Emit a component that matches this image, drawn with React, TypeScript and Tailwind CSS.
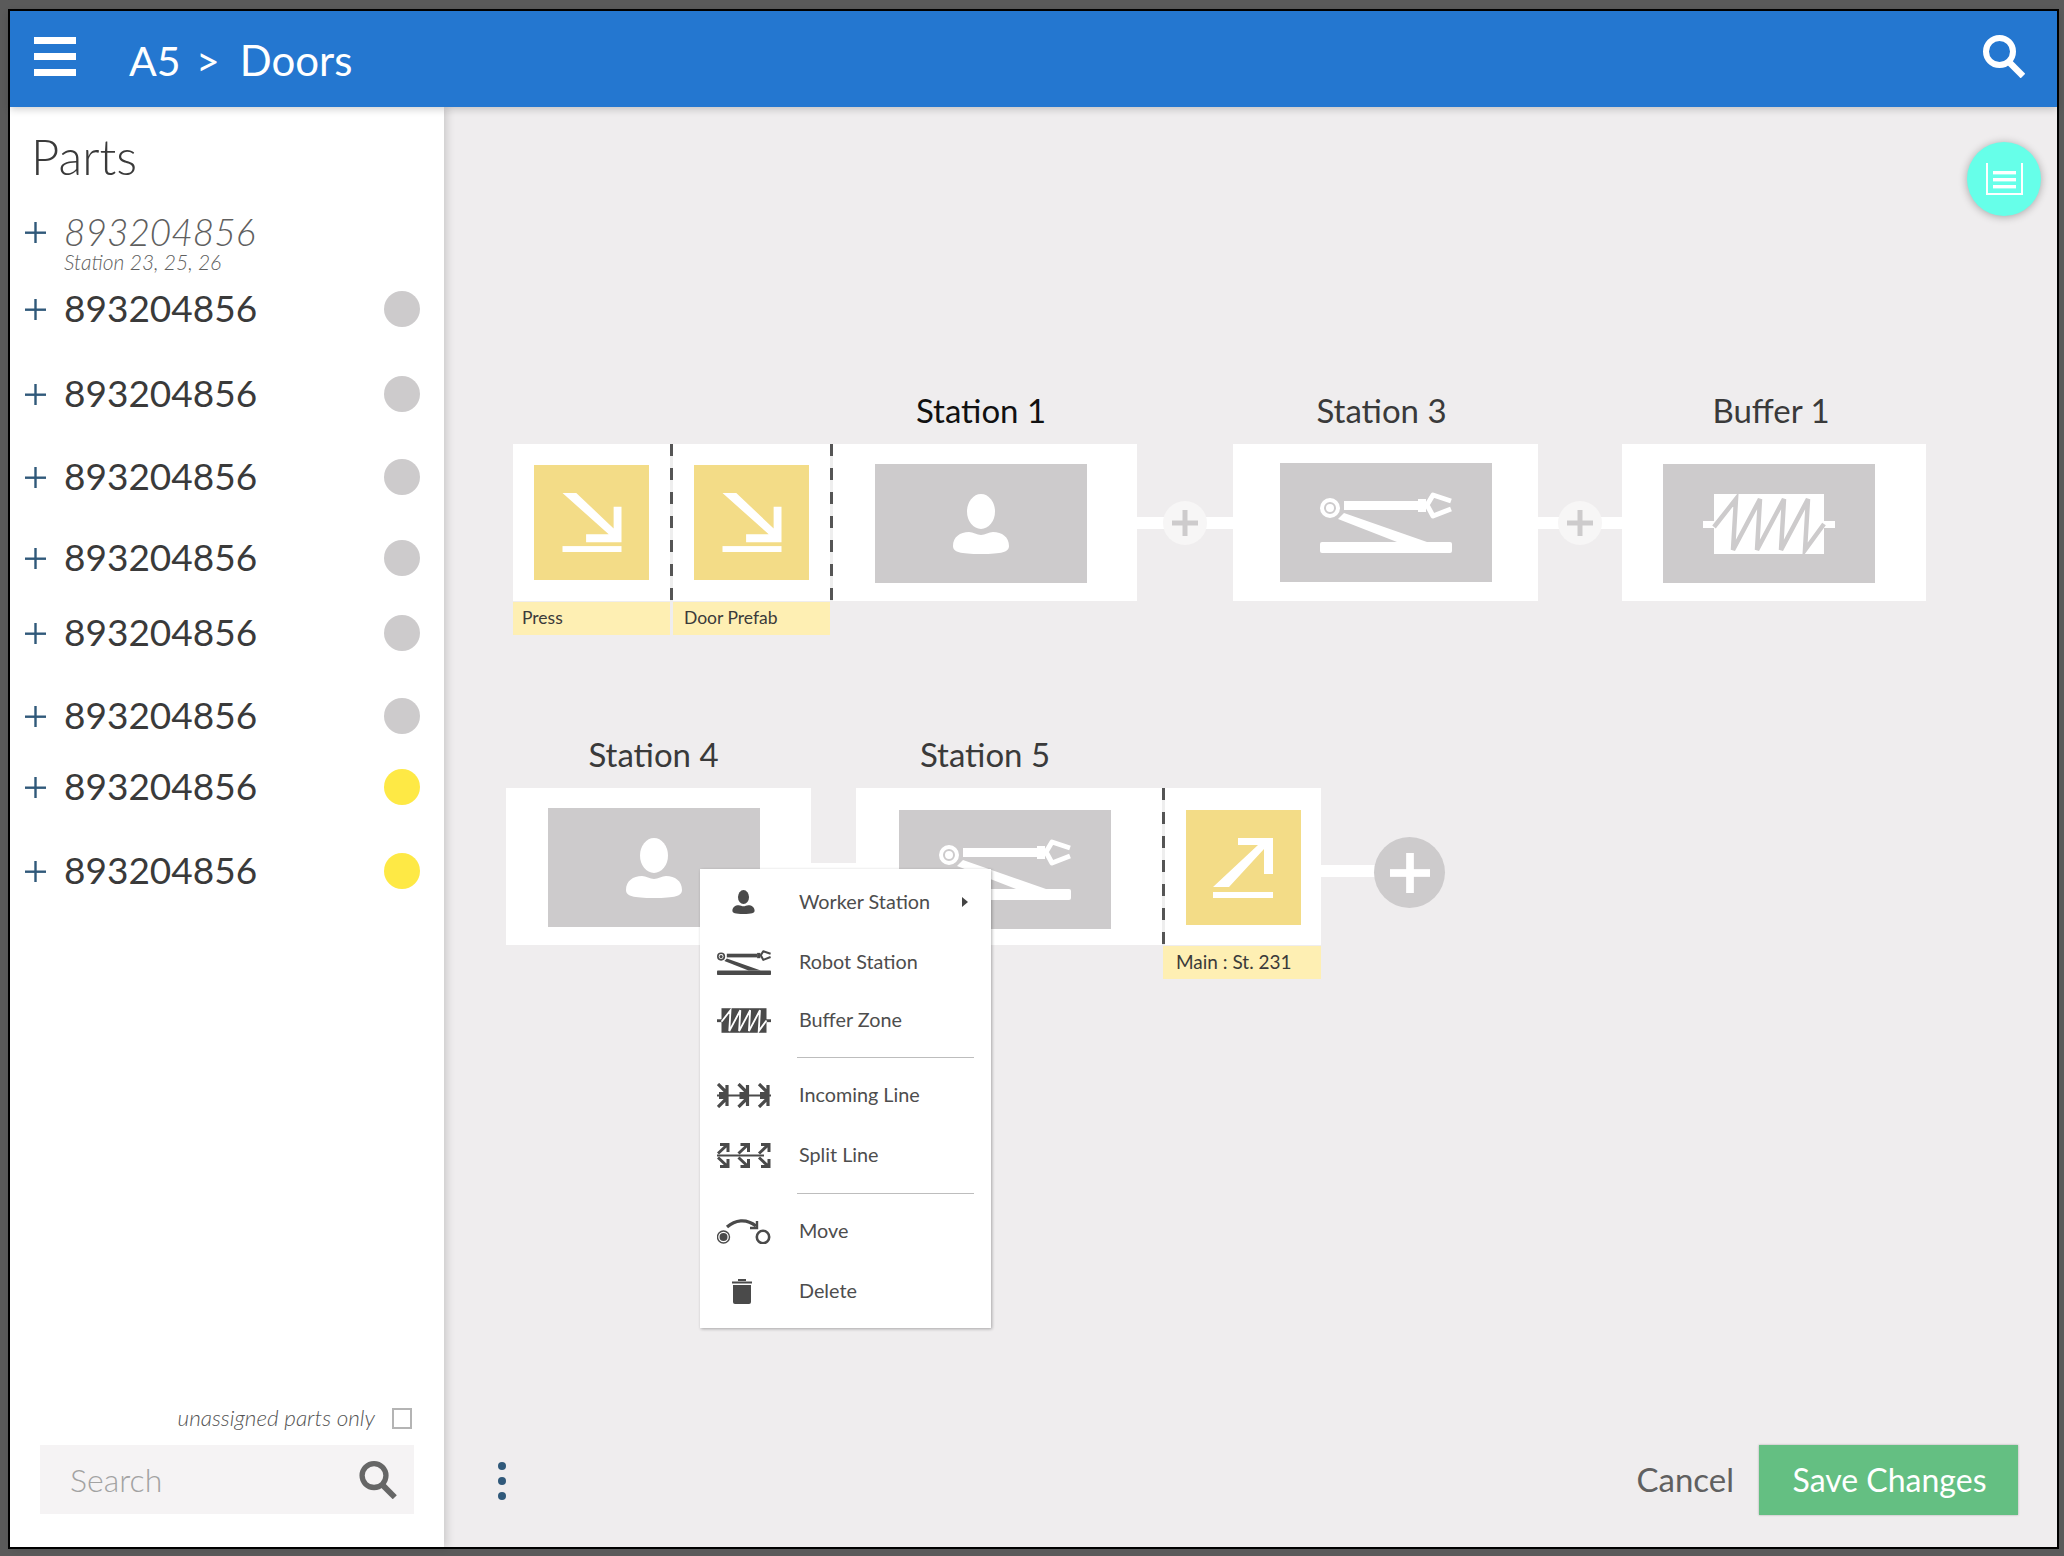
import type { ReactNode } from "react"

const font = "font-['Lato','Liberation_Sans',sans-serif]"
const dashes = "w-[3px] shrink-0 bg-[repeating-linear-gradient(to_bottom,#555_0,#555_12px,#eeeeee_12px,#eeeeee_24px)]"

function SearchIcon({ className }: { className: string }) {
  return (
    <svg viewBox="0 0 42 43" className={className} fill="none" stroke="currentColor">
      <circle cx="16.5" cy="16.5" r="13.5" strokeWidth="6" />
      <path d="M26 27 L40 41" strokeWidth="6.5" />
    </svg>
  )
}

function WorkerIcon({ className }: { className: string }) {
  return (
    <svg viewBox="0 0 58 60" className={className} fill="currentColor">
      <ellipse cx="29" cy="17.5" rx="14" ry="17.5" />
      <path d="M1 52 C1 43 8 38 17 38 C21 38 25 41 29 41 C33 41 37 38 41 38 C50 38 57 43 57 52 C57 58 50 60 29 60 C8 60 1 58 1 52Z" />
    </svg>
  )
}

function RobotIcon({ className }: { className: string }) {
  return (
    <svg viewBox="0 0 132 61" className={className} fill="currentColor">
      <path
        fillRule="evenodd"
        d="M0 16 a10 10 0 1 0 20 0 a10 10 0 1 0 -20 0 Z M4 16 a6 6 0 1 0 12 0 a6 6 0 1 0 -12 0 Z M6 16 a4 4 0 1 0 8 0 a4 4 0 1 0 -8 0 Z"
      />
      <rect x="24" y="9" width="74" height="9" />
      <path d="M98 7 H106 V20 H98 Z" />
      <path d="M131 9 L113 3 L107 13 L113 24 L131 17" fill="none" stroke="currentColor" strokeWidth="5" strokeLinejoin="round" />
      <path d="M18 27 L24 21 L107 50 H77 Z" />
      <rect x="0" y="50" width="132" height="11" rx="2" />
    </svg>
  )
}

function BufferIcon({ className, cut }: { className: string; cut: string }) {
  return (
    <svg viewBox="0 0 132 60" className={className} fill="currentColor">
      <rect x="0" y="27" width="132" height="7" />
      <rect x="11" y="0" width="110" height="60" />
      <path
        d="M11 33 L33 5 L30 56 L57 5 L54 56 L81 5 L78 56 L105 5 L102 56 L121 30"
        fill="none"
        strokeWidth="4.5"
        className={cut}
      />
    </svg>
  )
}

function ArrowInIcon() {
  return (
    <svg viewBox="0 0 60 60" className="h-[59px] w-[60px]" fill="white">
      <path d="M0 0 H14 L52 36 V14 H60 V50 H24 V42 H47 Z" />
      <rect x="0" y="54" width="60" height="6" />
    </svg>
  )
}

function ArrowOutIcon() {
  return (
    <svg viewBox="0 0 60 60" className="h-[60px] w-[60px]" fill="white">
      <path d="M25 0 H60 V36 H51 V11 L16 49 H0 L45 7 H25 Z" />
      <rect x="0" y="54" width="60" height="6" />
    </svg>
  )
}

function PlusGlyph({ className }: { className: string }) {
  return (
    <svg viewBox="0 0 26 26" className={className} fill="currentColor">
      <rect x="0" y="10.5" width="26" height="5" />
      <rect x="10.5" y="0" width="5" height="26" />
    </svg>
  )
}

function ThinPlus() {
  return (
    <svg viewBox="0 0 21 21" className="h-[21px] w-[21px] shrink-0 text-[#30597a]" fill="currentColor">
      <rect x="0" y="9.5" width="21" height="2.4" />
      <rect x="9.3" y="0" width="2.4" height="21" />
    </svg>
  )
}

function IncomingIcon() {
  return (
    <svg viewBox="0 0 54 25" className="h-[25px] w-[54px]" fill="none" stroke="currentColor">
      <path d="M0 12.5 H54" strokeWidth="2" />
      {[0, 20.5, 41].map((dx) => (
        <g key={dx} transform={`translate(${dx} 0)`} strokeWidth="3.2">
          <path d="M1 1 L10 10 M10 2 V10.5 H2" />
          <path d="M1 24 L10 15 M10 23 V14.5 H2" />
        </g>
      ))}
    </svg>
  )
}

function SplitIcon() {
  return (
    <svg viewBox="0 0 54 25" className="h-[25px] w-[54px]" fill="none" stroke="currentColor">
      <path d="M0 12.5 H47" strokeWidth="2" />
      {[0, 20.5, 41].map((dx) => (
        <g key={dx} transform={`translate(${dx} 0)`} strokeWidth="3">
          <path d="M1 10.5 L10 2 M3 1.5 H11 V9" />
          <path d="M1 14.5 L10 23 M3 23.5 H11 V16" />
        </g>
      ))}
    </svg>
  )
}

function MoveIcon() {
  return (
    <svg viewBox="0 0 54 26" className="h-[26px] w-[54px]" fill="none" stroke="currentColor">
      <circle cx="6.5" cy="19" r="6" strokeWidth="1.4" />
      <circle cx="6.5" cy="19" r="4" fill="currentColor" stroke="none" />
      <circle cx="46" cy="19" r="6.2" strokeWidth="2.6" />
      <path d="M10 9 C18 2 29 0 39 8" strokeWidth="3.2" />
      <path d="M33 10 H40 V3" strokeWidth="2.4" />
    </svg>
  )
}

function TrashIcon() {
  return (
    <svg viewBox="0 0 20 25" className="mr-[4px] h-[25px] w-[20px]" fill="currentColor">
      <rect x="0" y="2.5" width="20" height="2" />
      <rect x="6" y="0" width="8" height="2" />
      <path d="M1 6 H19 V23 Q19 25 17 25 H3 Q1 25 1 23 Z" />
    </svg>
  )
}

const parts = [
  { mt: "mt-[18px]", color: "bg-[#cdcbcc]" },
  { mt: "mt-[49px]", color: "bg-[#cdcbcc]" },
  { mt: "mt-[47px]", color: "bg-[#cdcbcc]" },
  { mt: "mt-[45px]", color: "bg-[#cdcbcc]" },
  { mt: "mt-[39px]", color: "bg-[#cdcbcc]" },
  { mt: "mt-[47px]", color: "bg-[#cdcbcc]" },
  { mt: "mt-[35px]", color: "bg-[#fee945]" },
  { mt: "mt-[48px]", color: "bg-[#fee945]" },
]

function Sidebar() {
  return (
    <aside className="z-10 flex w-[434px] shrink-0 flex-col bg-white pb-[33px] shadow-[3px_0_8px_rgba(0,0,0,0.15)]">
      <h2 className="ml-[21px] mt-[21px] h-[56px] text-[49px] font-light leading-[56px] text-[#3a3a3a]">Parts</h2>
      <div className="ml-[15px] mt-[30px] flex h-[36px] items-center gap-[18px]">
        <ThinPlus />
        <span className="text-[37px] font-light italic leading-[36px] text-[#5f5f5f]">893204856</span>
      </div>
      <div className="ml-[54px] mt-[1px] h-[22px] text-[21px] font-light italic leading-[22px] text-[#5f5f5f]">Station 23, 25, 26</div>
      <div className="flex flex-col">
        {parts.map((p, i) => (
          <div key={i} className={`ml-[15px] mr-[24px] flex h-[36px] items-center gap-[18px] ${p.mt}`}>
            <ThinPlus />
            <span className="flex-1 pb-[2px] text-[37px] font-normal leading-[36px] text-[#3a3a3a]">893204856</span>
            <span className={`h-[36px] w-[36px] rounded-full ${p.color}`} />
          </div>
        ))}
      </div>
      <div className="mt-auto flex items-center justify-end pr-[32px]">
        <span className="text-[22.5px] font-light italic text-[#555]">unassigned parts only</span>
        <span className="ml-[17px] h-[21px] w-[20px] border-2 border-[#b4b4b4]" />
      </div>
      <div className="ml-[30px] mt-[10px] flex h-[69px] w-[374px] items-center justify-between bg-[#f5f3f4] pl-[30px] pr-[17px]">
        <span className="text-[32px] font-light text-[#a2a2a2]">Search</span>
        <SearchIcon className="h-[38px] w-[38px] text-[#666]" />
      </div>
    </aside>
  )
}

function Connector({ w, children }: { w: string; children?: ReactNode }) {
  return <div className={`relative mt-[127px] h-[12px] shrink-0 bg-white ${w}`}>{children}</div>
}

function SmallPlus({ left }: { left: string }) {
  return (
    <div className={`absolute top-[-16px] flex h-[44px] w-[44px] items-center justify-center rounded-full bg-[#f7f6f6] text-[#cdcbcc] ${left}`}>
      <PlusGlyph className="h-[26px] w-[26px]" />
    </div>
  )
}

function StationBox({ w, title, titleClass, boxClass, children }: { w: string; title: string; titleClass: string; boxClass: string; children: ReactNode }) {
  return (
    <div className={`flex shrink-0 flex-col ${w}`}>
      <div className={`mb-[12px] flex h-[42px] items-center justify-center whitespace-nowrap text-[33px] ${titleClass}`}>{title}</div>
      <div className={`flex h-[157px] items-center justify-center bg-white ${boxClass}`}>
        <div className="flex h-[119px] w-[212px] items-center justify-center bg-[#cdcbcc] text-white">{children}</div>
      </div>
    </div>
  )
}

function YellowCell({ w, label, labelPad, children }: { w: string; label: string; labelPad: string; children: ReactNode }) {
  return (
    <div className={`flex shrink-0 flex-col ${w}`}>
      <div className="h-[54px]" />
      <div className="flex h-[157px] bg-white">
        <div className="flex flex-1 items-center justify-center">
          <div className="flex h-[115px] w-[115px] items-center justify-center bg-[#f3dc87]">{children}</div>
        </div>
        <div className={dashes} />
      </div>
      <div className={`mr-[3px] mt-[1px] flex h-[33px] items-center bg-[#feefb3] text-[17.5px] text-[#3a3a3a] ${labelPad}`}>{label}</div>
    </div>
  )
}

const menuItems: { label: string; mt: string; icon: ReactNode; sub?: boolean; sep?: string }[] = [
  { label: "Worker Station", mt: "mt-[4px]", icon: <WorkerIcon className="h-[24px] w-[23px]" />, sub: true },
  { label: "Robot Station", mt: "mt-[2px]", icon: <RobotIcon className="h-[25px] w-[54px]" /> },
  { label: "Buffer Zone", mt: "mt-0", icon: <BufferIcon className="h-[25px] w-[54px]" cut="stroke-white" /> },
  { label: "Incoming Line", mt: "mt-[8px]", icon: <IncomingIcon />, sep: "mt-[8px]" },
  { label: "Split Line", mt: "mt-[2px]", icon: <SplitIcon /> },
  { label: "Move", mt: "mt-[8px]", icon: <MoveIcon />, sep: "mt-[9px]" },
  { label: "Delete", mt: "mt-[2px]", icon: <TrashIcon /> },
]

function ContextMenu() {
  return (
    <div className="absolute left-[256px] top-[762px] flex h-[459px] w-[291px] flex-col bg-white shadow-[1px_1px_3px_rgba(0,0,0,0.3)]">
      {menuItems.map((m) => (
        <div key={m.label}>
          {m.sep && <div className={`ml-[97px] mr-[17px] h-px bg-[#bdbdbd] ${m.sep}`} />}
          <div className={`flex h-[58px] items-center ${m.mt}`}>
            <div className="flex w-[99px] justify-center pr-[12px] text-[#4a4a4a]">{m.icon}</div>
            <span className="text-[19.8px] font-normal text-[#4d4d4d]">{m.label}</span>
            {m.sub && <span className="ml-[32px] h-0 w-0 border-y-[5px] border-l-[6px] border-y-transparent border-l-[#444]" />}
          </div>
        </div>
      ))}
    </div>
  )
}

function Canvas() {
  return (
    <div className="relative flex-1">
      <div className="ml-[69px] mt-[283px] flex">
        <YellowCell w="w-[160px]" label="Press" labelPad="pl-[9px]"><ArrowInIcon /></YellowCell>
        <YellowCell w="w-[160px]" label="Door Prefab" labelPad="pl-[11px]"><ArrowInIcon /></YellowCell>
        <StationBox w="w-[304px]" title="Station 1" titleClass="pr-[8px] text-[#111]" boxClass="pr-[9px] pt-[2px]">
          <WorkerIcon className="h-[60px] w-[58px]" />
        </StationBox>
        <Connector w="w-[96px]"><SmallPlus left="left-[26px]" /></Connector>
        <StationBox w="w-[305px]" title="Station 3" titleClass="pr-[8px] text-[#3a3a3a]" boxClass="">
          <RobotIcon className="h-[61px] w-[132px]" />
        </StationBox>
        <Connector w="w-[84px]"><SmallPlus left="left-[20px]" /></Connector>
        <StationBox w="w-[304px]" title="Buffer 1" titleClass="pr-[6px] text-[#3a3a3a]" boxClass="pr-[10px] pt-[2px]">
          <BufferIcon className="h-[60px] w-[132px]" cut="stroke-[#cdcbcc]" />
        </StationBox>
      </div>

      <div className="ml-[62px] mt-[99px] flex">
        <StationBox w="w-[305px]" title="Station 4" titleClass="pr-[10px] text-[#3a3a3a]" boxClass="pr-[10px] pt-[2px]">
          <WorkerIcon className="h-[60px] w-[58px]" />
        </StationBox>
        <div className="w-[45px] shrink-0">
          <div className="mt-[129px] h-[12px] bg-white" />
        </div>
        <StationBox w="w-[306px]" title="Station 5" titleClass="pr-[48px] text-[#3a3a3a]" boxClass="pr-[9px] pt-[5px]">
          <RobotIcon className="h-[61px] w-[132px]" />
        </StationBox>
        <div className="flex w-[159px] shrink-0 flex-col">
          <div className="h-[54px]" />
          <div className="flex h-[157px] bg-white">
            <div className={dashes} />
            <div className="flex flex-1 items-center justify-center pt-[2px]">
              <div className="flex h-[115px] w-[115px] items-center justify-center bg-[#f3dc87]"><ArrowOutIcon /></div>
            </div>
          </div>
          <div className="ml-[1px] mt-[1px] flex h-[33px] items-center bg-[#feefb3] pl-[13px] text-[19px] text-[#3a3a3a]">Main : St. 231</div>
        </div>
        <div className="relative mt-[131px] h-[12px] w-[54px] shrink-0 bg-white">
          <div className="absolute left-[53px] top-[-28px] flex h-[71px] w-[71px] items-center justify-center rounded-full bg-[#cdcbcc] text-white">
            <PlusGlyph className="h-[40px] w-[40px]" />
          </div>
        </div>
      </div>

      <ContextMenu />

      <button className="absolute right-[16px] top-[35px] flex h-[74px] w-[74px] items-center justify-center rounded-full bg-[#66ffe9] shadow-[0_1px_8px_rgba(0,0,0,0.3)]">
        <svg viewBox="0 0 37 32" className="h-[32px] w-[37px]" fill="white">
          <path d="M0 0 H2 V30 H35 V0 H37 V32 H0 Z" />
          <rect x="7" y="8" width="23" height="3.4" />
          <rect x="7" y="15" width="23" height="3.4" />
          <rect x="7" y="22" width="23" height="3.4" />
        </svg>
      </button>
    </div>
  )
}

export default function App() {
  return (
    <div className={`h-[1556px] w-[2064px] bg-[#5a5a5a] pb-[7px] pl-[8px] pr-[5px] pt-[9px] ${font}`}>
      <div className="flex h-full flex-col border-2 border-black bg-[#efedee]">
        <header className="z-20 flex h-[96px] shrink-0 items-center bg-[#2477d0] pl-[24px] pr-[32px] text-white shadow-[0_2px_8px_rgba(0,0,0,0.2)]">
          <div className="mb-[5px] flex w-[42px] flex-col gap-[9px]">
            <span className="h-[7px] bg-white" />
            <span className="h-[7px] bg-white" />
            <span className="h-[7px] bg-white" />
          </div>
          <div className="ml-[53px] mt-[2px] flex items-center text-[41px] leading-none">
            <span className="w-[46px]">A5</span>
            <span className="ml-[21px]">&gt;</span>
            <span className="ml-[20px] text-[42px]">Doors</span>
          </div>
          <SearchIcon className="mb-[5px] ml-auto h-[43px] w-[42px]" />
        </header>
        <div className="flex min-h-0 flex-1">
          <Sidebar />
          <main className="flex flex-1 flex-col">
            <Canvas />
            <footer className="flex items-center pb-[32px] pl-[54px] pr-[39px]">
              <div className="mt-[2px] flex flex-col gap-[7px]">
                <span className="h-[8px] w-[8px] rounded-full bg-[#30597a]" />
                <span className="h-[8px] w-[8px] rounded-full bg-[#30597a]" />
                <span className="h-[8px] w-[8px] rounded-full bg-[#30597a]" />
              </div>
              <button className="ml-auto text-[33px] text-[#606060]">Cancel</button>
              <button className="ml-[25px] flex h-[70px] w-[259px] items-center justify-center bg-[#64bf82] pl-[2px] text-[32px] text-white shadow-[0_0_2px_rgba(0,0,0,0.3)]">Save Changes</button>
            </footer>
          </main>
        </div>
      </div>
    </div>
  )
}
